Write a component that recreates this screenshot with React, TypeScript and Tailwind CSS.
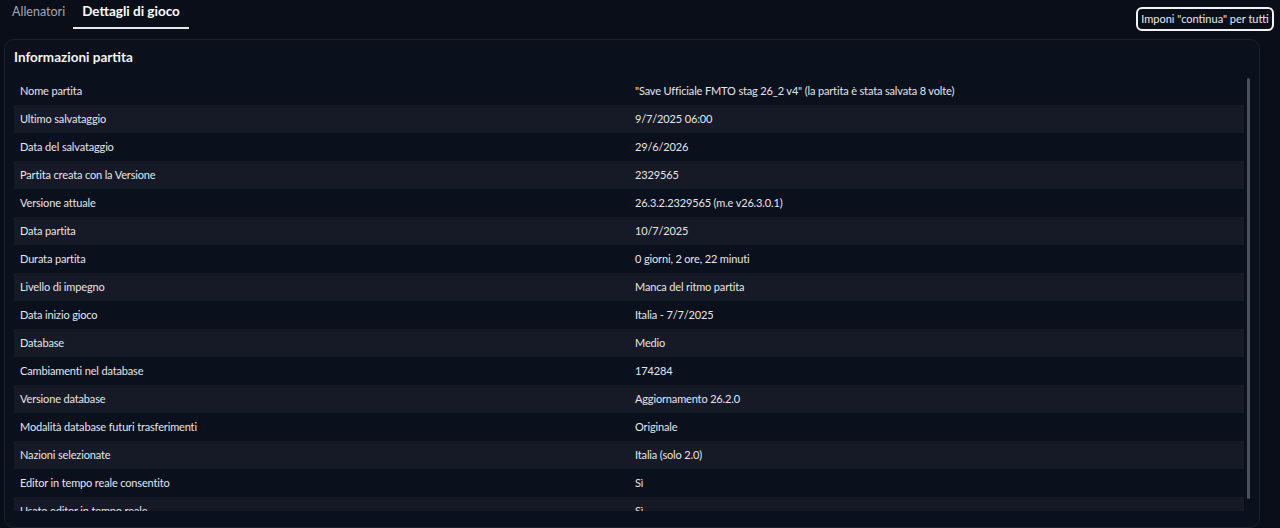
const ROWS: [string, string][] = [
  ['Nome partita', '"Save Ufficiale FMTO stag 26_2 v4" (la partita è stata salvata 8 volte)'],
  ['Ultimo salvataggio', '9/7/2025 06:00'],
  ['Data del salvataggio', '29/6/2026'],
  ['Partita creata con la Versione', '2329565'],
  ['Versione attuale', '26.3.2.2329565 (m.e v26.3.0.1)'],
  ['Data partita', '10/7/2025'],
  ['Durata partita', '0 giorni, 2 ore, 22 minuti'],
  ['Livello di impegno', 'Manca del ritmo partita'],
  ['Data inizio gioco', 'Italia - 7/7/2025'],
  ['Database', 'Medio'],
  ['Cambiamenti nel database', '174284'],
  ['Versione database', 'Aggiornamento 26.2.0'],
  ['Modalità database futuri trasferimenti', 'Originale'],
  ['Nazioni selezionate', 'Italia (solo 2.0)'],
  ['Editor in tempo reale consentito', 'Sì'],
  ['Usato editor in tempo reale', 'Sì'],
  ['Partita online', 'No'],
];

export default function App() {
  return (
    <div
      className="h-[528px] w-[1280px] overflow-hidden bg-[#0a0e19] text-white"
      style={{ fontFamily: 'Lato, "Noto Sans", sans-serif' }}
    >
      <div className="flex items-start justify-between pl-[3px] pr-[6px]">
        <div className="flex">
          <div className="pl-[9px] pr-[8px] pt-[3px] pb-[7px] text-[12.5px] leading-[18px] text-[#a3a7b2]">Allenatori</div>
          <div className="border-b-2 border-[#e6e8ec] px-[9px] pt-[2px] pb-[6px] text-[13.5px] leading-[19px] font-bold text-white">
            Dettagli di gioco
          </div>
        </div>
        <button className="mt-[7px] h-[24px] w-[138px] whitespace-nowrap rounded-md border-2 border-[#f2f3f5] text-[11px] text-[#e8e9ec]">
          Imponi "continua" per tutti
        </button>
      </div>

      <div className="mt-[8px] ml-[4px] w-[1256px] rounded-[10px] border border-[#1c2130] bg-[#0b101d] pl-[9px] pr-[9px] pb-[16px]">
        <h2 className="pt-[7px] pb-[10px] text-[13.5px] leading-[20px] font-bold text-[#f3f4f6]">Informazioni partita</h2>
        <div className="flex h-[434px] overflow-hidden">
          <div className="flex-1">
            {ROWS.map(([label, value], i) => (
              <div
                key={label}
                className={`grid h-[28px] grid-cols-2 items-center text-[11px] tracking-[-0.15px] text-[#e4e6ea] ${
                  i % 2 === 1 ? 'bg-[#161a27]' : ''
                }`}
              >
                <span className="px-[6px]">{label}</span>
                <span className="px-[6px]">{value}</span>
              </div>
            ))}
          </div>
          <div className="ml-[3px] w-[3px] pt-[1px]">
            <div className="h-[421px] rounded-full bg-[#4b505d]" />
          </div>
        </div>
      </div>
    </div>
  );
}
